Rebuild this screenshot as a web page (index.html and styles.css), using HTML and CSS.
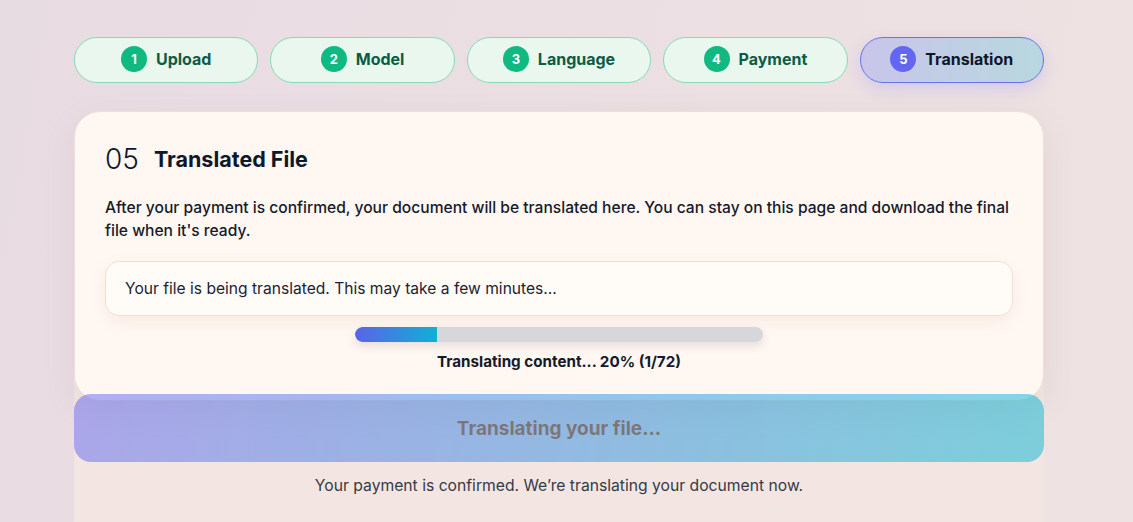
FILE: index.html
```html
<!DOCTYPE html>
<html lang="en">
<head>
<meta charset="utf-8">
<title>Translation</title>
<link rel="stylesheet" href="styles.css">
</head>
<body>
<div class="page">
  <nav class="steps">
    <div class="step"><span class="num">1</span><span class="label">Upload</span></div>
    <div class="step"><span class="num">2</span><span class="label">Model</span></div>
    <div class="step"><span class="num">3</span><span class="label">Language</span></div>
    <div class="step"><span class="num">4</span><span class="label">Payment</span></div>
    <div class="step active"><span class="num">5</span><span class="label">Translation</span></div>
  </nav>

  <section class="card">
    <h2 class="title"><span class="idx">05</span><span class="name">Translated File</span></h2>
    <p class="desc">After your payment is confirmed, your document will be translated here. You can stay on this page and download the final file when it's ready.</p>
    <div class="status">Your file is being translated. This may take a few minutes...</div>
    <div class="progress"><div class="fill" style="width:20%"></div></div>
    <div class="progress-label">Translating content... 20% (1/72)</div>
  </section>

  <div class="footer">
    <button class="cta" disabled>Translating your file...</button>
    <p class="note">Your payment is confirmed. We’re translating your document now.</p>
  </div>
</div>
</body>
</html>
```
FILE: styles.css
```css
* { box-sizing: border-box; }
html, body { margin: 0; padding: 0; }
body {
  font-family: Inter, "Noto Sans", sans-serif;
  background: linear-gradient(100deg, #e8dce3 0%, #ebdfe3 50%, #eee2e2 100%);
  min-height: 522px;
  color: #141a2b;
}
.page {
  width: 970px;
  margin: 0 0 0 74px;
  padding-top: 37px;
}
.steps {
  display: grid;
  grid-template-columns: repeat(5, 1fr);
  gap: 12px;
}
.step {
  height: 46px;
  border-radius: 23px;
  border: 1px solid #86dbb5;
  background: #e9f7ef;
  display: flex;
  align-items: center;
  justify-content: center;
  gap: 9px;
  font-weight: 700;
  font-size: 16px;
  line-height: 20px;
  padding-bottom: 2px;
  color: #0c5c45;
}
.step .num {
  width: 26px;
  height: 26px;
  border-radius: 50%;
  background: #10b981;
  color: #fff;
  font-size: 13px;
  display: flex;
  align-items: center;
  justify-content: center;
}
.step.active {
  background: linear-gradient(90deg, #c9c5ea 0%, #b7d8df 100%);
  border-color: #6b70ec;
  color: #0f172a;
  box-shadow: 0 6px 16px rgba(99, 102, 241, 0.18);
}
.step.active .num { background: #6366f1; }

.card {
  margin-top: 28px;
  background: #fff7f2;
  border: 1px solid #f0dfd6;
  border-radius: 26px;
  padding: 29px 30px 28px;
  box-shadow: 0 10px 30px rgba(160, 120, 110, 0.12);
  position: relative;
  z-index: 1;
}
.title {
  margin: 0;
  display: flex;
  align-items: center;
  gap: 15px;
  height: 36px;
}
.title .idx {
  font-size: 28px;
  font-weight: 300;
  color: #0f172a;
}
.title .name {
  font-size: 21.5px;
  font-weight: 700;
  color: #0f172a;
}
.desc {
  margin: 19px 0 0;
  font-size: 15.6px;
  font-weight: 500;
  line-height: 23px;
  color: #141a2b;
}
.status {
  margin-top: 19px;
  height: 55px;
  display: flex;
  align-items: center;
  padding: 0 19px;
  background: #fffcf8;
  border: 1px solid #efdfd7;
  border-radius: 14px;
  font-size: 15.6px;
  color: #1c2233;
  box-shadow: 0 6px 16px rgba(190, 150, 130, 0.10);
}
.progress {
  margin: 11px auto 0;
  width: 408px;
  height: 15px;
  border-radius: 8px;
  background: #d7d6da;
  overflow: hidden;
  box-shadow: 0 4px 10px rgba(120, 110, 120, 0.18);
}
.progress .fill {
  height: 100%;
  background: linear-gradient(90deg, #5a63ea 0%, #10b0d5 100%);
  border-radius: 8px 0 0 8px;
}
.progress-label {
  margin-top: 10px;
  text-align: center;
  font-size: 15.2px;
  font-weight: 700;
  line-height: 20px;
  color: #141a2b;
}

.footer {
  margin-top: -25px;
  padding-top: 18px;
  background: #f3e6e2;
  min-height: 150px;
}
.cta {
  display: block;
  width: 100%;
  height: 68px;
  border: 0;
  border-radius: 17px;
  background: linear-gradient(100deg, #6366f1 0%, #06b6d4 100%);
  opacity: 0.5;
  font-family: inherit;
  font-size: 19px;
  font-weight: 700;
  color: #0a0a12;
  position: relative;
  z-index: 2;
}
.note {
  margin: 13px 0 0;
  text-align: center;
  font-size: 15.7px;
  line-height: 22px;
  color: #343a48;
}
```
